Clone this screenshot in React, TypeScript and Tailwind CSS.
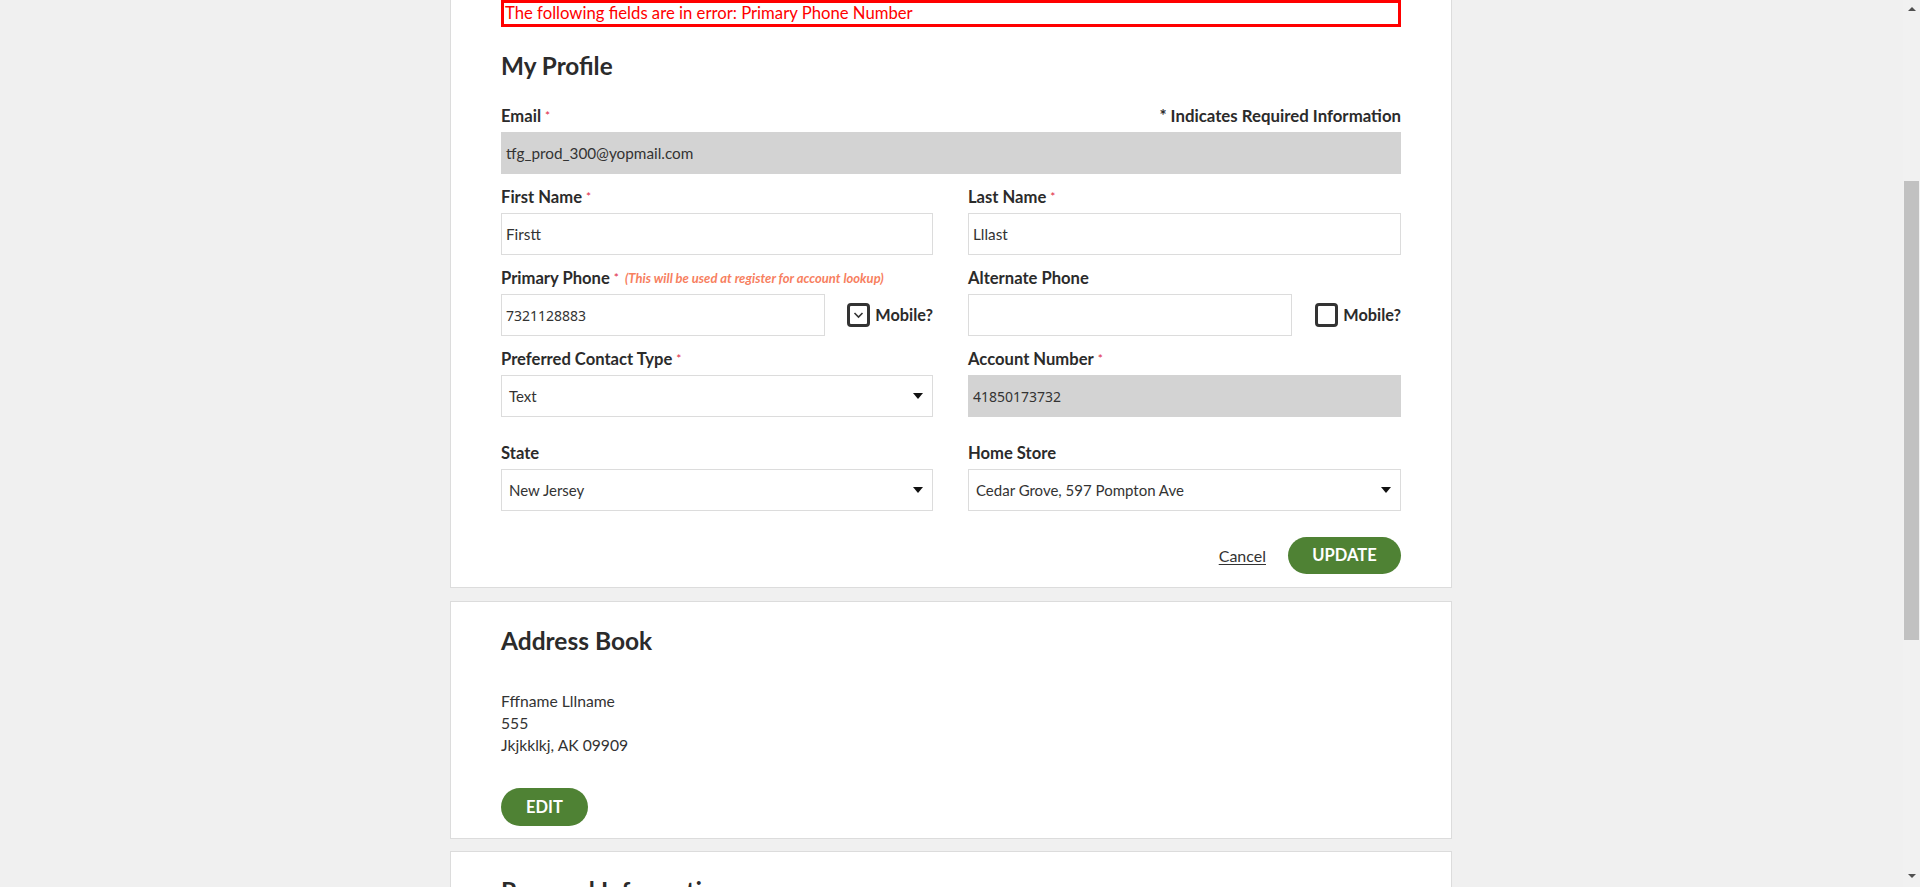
import React from "react";

const font = { fontFamily: "Lato, 'Noto Sans', sans-serif" };

function Req() {
  return <span className="ml-[4px] text-[12px] font-normal text-[#e0263f] align-top">*</span>;
}

function Label({ children, req }: { children: React.ReactNode; req?: boolean }) {
  return (
    <div className="h-[20px] mb-[6px] text-[16.6px] leading-[20px] font-bold text-[#2b2b2b] whitespace-nowrap">
      {children}
      {req && <Req />}
    </div>
  );
}

function TextBox({ value, grey, mono }: { value?: string; grey?: boolean; mono?: boolean }) {
  return (
    <div
      className={
        "h-[42px] w-full flex items-center px-[4px] border text-[15.3px] text-[#333] " +
        (grey ? "bg-[#d3d3d3] border-[#d3d3d3]" : "bg-white border-[#dcdcdc]")
      }
      style={mono ? { fontFamily: "'Noto Sans', sans-serif", fontSize: "14px" } : undefined}
    >
      {value}
    </div>
  );
}

function SelectBox({ value }: { value: string }) {
  return (
    <div className="h-[42px] w-full flex items-center justify-between pl-[7px] pr-[9px] border border-[#dcdcdc] bg-white text-[15px] text-[#333]">
      <span>{value}</span>
      <svg width="10" height="6" viewBox="0 0 10 6">
        <path d="M0 0 L10 0 L5 6 Z" fill="#111" />
      </svg>
    </div>
  );
}

function Check({ checked }: { checked?: boolean }) {
  return (
    <div className="flex items-center gap-[5px]">
      <div className="w-[23px] h-[24px] border-[3px] border-[#333] rounded-[4px] bg-white flex items-center justify-center">
        {checked && (
          <svg width="11" height="8" viewBox="0 0 11 8">
            <path d="M1.5 2 L5.5 6 L9.5 2" fill="none" stroke="#333" strokeWidth="1.6" />
          </svg>
        )}
      </div>
      <span className="text-[16.3px] font-bold text-[#2b2b2b]">Mobile?</span>
    </div>
  );
}

export default function App() {
  return (
    <div className="flex h-[887px] w-full overflow-hidden bg-[#f0f0f0]" style={font}>
      <div className="flex-1 overflow-hidden">
        <div className="w-[1002px] ml-[450px]">
          {/* My Profile card */}
          <div className="bg-white border-x border-b border-[#dcdcdc] px-[50px] pb-[13px]">
            <div className="h-[27px] border-[3px] border-[#ff0000] text-[#ff0000] text-[16.7px] leading-[20px] pl-[1px]">
              The following fields are in error: Primary Phone Number
            </div>
            <h1 className="mt-[24px] h-[30px] text-[24.3px] leading-[30px] font-bold text-[#2b2b2b]">My Profile</h1>

            <div className="mt-[25px]">
              <div className="flex justify-between">
                <Label req>Email</Label>
                <div className="h-[20px] text-[16.8px] leading-[20px] font-bold text-[#2b2b2b]">* Indicates Required Information</div>
              </div>
              <TextBox value="tfg_prod_300@yopmail.com" grey />
            </div>

            <div className="grid grid-cols-[432px_1fr] gap-x-[35px] gap-y-[13px] mt-[13px]">
              <div>
                <Label req>First Name</Label>
                <TextBox value="Firstt" />
              </div>
              <div>
                <Label req>Last Name</Label>
                <TextBox value="Lllast" />
              </div>

              <div>
                <div className="h-[20px] mb-[6px] text-[16.6px] leading-[20px] font-bold text-[#2b2b2b] whitespace-nowrap flex items-start">
                  <span>Primary Phone</span>
                  <Req />
                  <span className="ml-[6px] text-[13px] italic font-bold text-[#f7805f] leading-[21px]">
                    (This will be used at register for account lookup)
                  </span>
                </div>
                <div className="flex items-center justify-between">
                  <div className="w-[324px]">
                    <TextBox value="7321128883" mono />
                  </div>
                  <Check checked />
                </div>
              </div>
              <div>
                <Label>Alternate Phone</Label>
                <div className="flex items-center justify-between">
                  <div className="w-[324px]">
                    <TextBox />
                  </div>
                  <Check />
                </div>
              </div>

              <div>
                <Label req>Preferred Contact Type</Label>
                <SelectBox value="Text" />
              </div>
              <div>
                <Label req>Account Number</Label>
                <TextBox value="41850173732" grey mono />
              </div>

              <div className="mt-[13px]">
                <Label>State</Label>
                <SelectBox value="New Jersey" />
              </div>
              <div className="mt-[13px]">
                <Label>Home Store</Label>
                <SelectBox value="Cedar Grove, 597 Pompton Ave" />
              </div>
            </div>

            <div className="mt-[26px] flex justify-end items-center gap-[22px]">
              <a className="text-[16px] text-[#333] underline underline-offset-2">Cancel</a>
              <button className="h-[37px] w-[113px] rounded-full bg-[#4f8234] text-white text-[16.5px] font-bold">
                UPDATE
              </button>
            </div>
          </div>

          {/* Address Book card */}
          <div className="mt-[13px] bg-white border border-[#dcdcdc] px-[50px] pt-[24px] pb-[12px]">
            <h2 className="h-[30px] text-[24.5px] leading-[30px] font-bold text-[#2b2b2b]">Address Book</h2>
            <div className="mt-[34px] text-[15.7px] leading-[22px] text-[#333]">
              <div>Fffname Lllname</div>
              <div>555</div>
              <div>Jkjkklkj, AK 09909</div>
            </div>
            <button className="mt-[32px] h-[38px] w-[87px] rounded-full bg-[#4f8234] text-white text-[16.5px] font-bold">
              EDIT
            </button>
          </div>

          {/* Personal Information card */}
          <div className="mt-[12px] bg-white border border-[#dcdcdc] px-[50px] pt-[24px] h-[200px]">
            <h2 className="h-[30px] text-[24.5px] leading-[30px] font-bold text-[#2b2b2b]">Personal Information</h2>
          </div>
        </div>
      </div>

      {/* scrollbar */}
      <div className="w-[17px] h-full bg-[#f1f1f1] flex flex-col items-center">
        <div className="h-[17px] flex items-center justify-center">
          <svg width="8" height="4" viewBox="0 0 8 4">
            <path d="M0 4 L4 0 L8 4 Z" fill="#505050" />
          </svg>
        </div>
        <div className="mt-[164px] w-[15px] h-[459px] bg-[#c1c1c1]" />
        <div className="flex-1" />
        <div className="h-[17px] flex items-center justify-center mb-[3px]">
          <svg width="8" height="4" viewBox="0 0 8 4">
            <path d="M0 0 L8 0 L4 4 Z" fill="#505050" />
          </svg>
        </div>
      </div>
    </div>
  );
}
